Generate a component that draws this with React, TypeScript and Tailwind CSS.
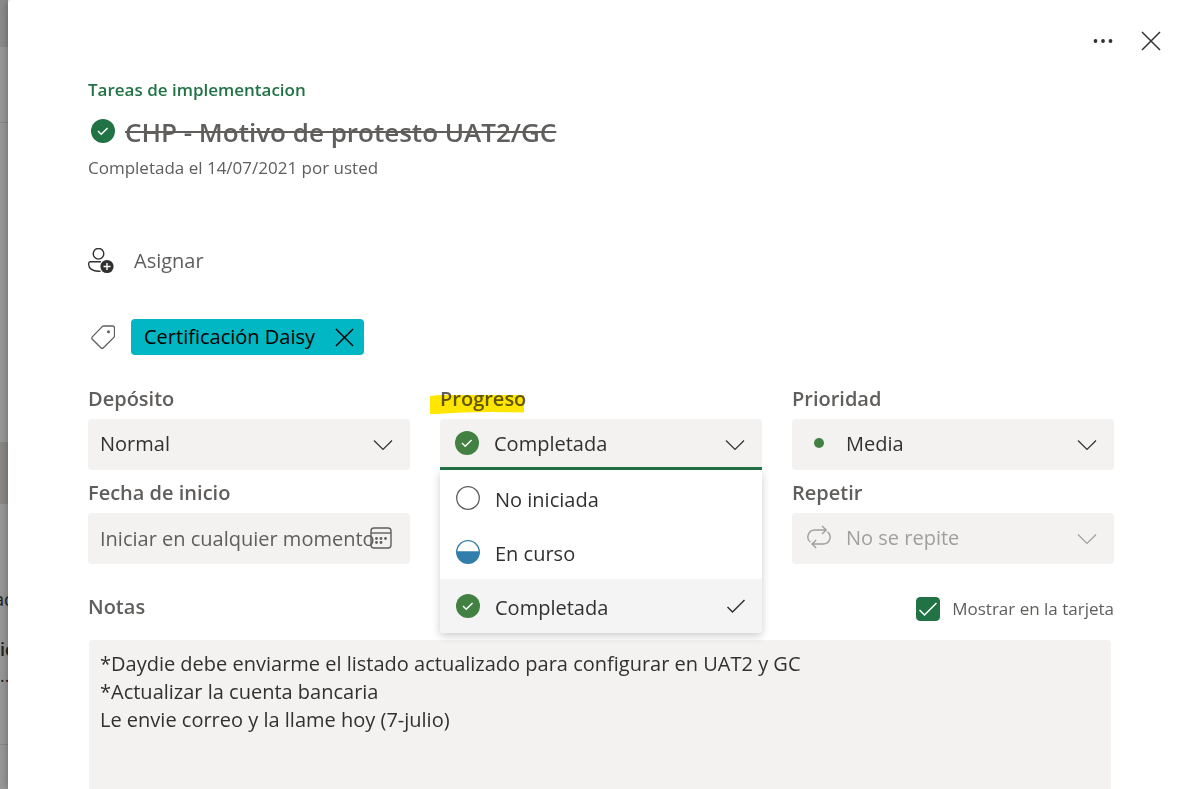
import React, { useState } from 'react';

// Small drawings used by the form
function CheckCircle({ className }: { className: string }) {
  return (
    <svg viewBox="0 0 24 24" className={className} aria-hidden="true">
      <circle cx="12" cy="12" r="12" fill="currentColor" />
      <path d="M7 12.1l3.2 3.2 6.4-6.4" fill="none" stroke="#fff" strokeWidth="1.4" />
    </svg>
  );
}

function EmptyCircle() {
  return (
    <svg viewBox="0 0 24 24" className="size-6" aria-hidden="true">
      <circle cx="12" cy="12" r="11.3" fill="#fff" stroke="#605e5c" strokeWidth="1.3" />
    </svg>
  );
}

function HalfCircle() {
  return (
    <svg viewBox="0 0 24 24" className="size-6 text-[#327eaa]" aria-hidden="true">
      <circle cx="12" cy="12" r="11.3" fill="#fff" stroke="currentColor" strokeWidth="1.3" />
      <path d="M0.5 11.3a11.5 12 0 0 0 23 0z" fill="currentColor" />
    </svg>
  );
}

function Chevron({ className }: { className: string }) {
  return (
    <svg viewBox="0 0 20 12" className={className} fill="none" stroke="currentColor" strokeWidth="1.2" aria-hidden="true">
      <path d="M1 1.5l9 9 9-9" />
    </svg>
  );
}

function Cross({ className }: { className: string }) {
  return (
    <svg viewBox="0 0 20 20" className={className} fill="none" stroke="currentColor" strokeWidth="1.5" aria-hidden="true">
      <path d="M1 1l18 18M19 1L1 19" />
    </svg>
  );
}

function Check({ className }: { className: string }) {
  return (
    <svg viewBox="0 0 20 16" className={className} fill="none" stroke="currentColor" strokeWidth="1.5" aria-hidden="true">
      <path d="M1.5 9l5 5L18.5 2" />
    </svg>
  );
}

function AssignIcon() {
  return (
    <svg viewBox="0 0 26 26" className="size-[26px] shrink-0" fill="none" stroke="#323130" strokeWidth="1.4" aria-hidden="true">
      <circle cx="10.5" cy="5.8" r="5.3" />
      <path d="M13 13.800H2.400a1.600 1.600 0 0 0-1.700 1.600v1c0 4 4.200 6.800 9.800 6.800h2" />
      <circle cx="19" cy="18.500" r="6.600" fill="#323130" stroke="none" />
      <path d="M19 15v7M15.500 18.500h7" stroke="#fff" />
    </svg>
  );
}

function TagIcon() {
  return (
    <svg viewBox="0 0 24 24" className="size-6 shrink-0" fill="none" stroke="#605e5c" strokeWidth="1.3" strokeLinejoin="round" aria-hidden="true">
      <path d="M12.8 1H21.5a2 2 0 0 1 2 2v8a2 2 0 0 1-.6 1.400L12.400 22.800a1.800 1.800 0 0 1-2.500 0L1.300 14.200a1.600 1.600 0 0 1 0-2.300L11.200 1.600a2.400 2.400 0 0 1 1.600-.6z" />
      <circle cx="17.5" cy="6.800" r="1.500" fill="#605e5c" stroke="none" />
    </svg>
  );
}

function CalendarIcon({ className }: { className: string }) {
  return (
    <svg viewBox="0 0 22 22" className={className} fill="none" stroke="#605e5c" strokeWidth="1.4" aria-hidden="true">
      <rect x="1" y="1" width="20" height="20" rx="3" />
      <path d="M1 6h20" />
      <g fill="#605e5c" stroke="none">
        <circle cx="6.5" cy="11.5" r="1.4" />
        <circle cx="11" cy="11.5" r="1.4" />
        <circle cx="15.5" cy="11.5" r="1.4" />
        <circle cx="6.5" cy="15.5" r="1.4" />
        <circle cx="11" cy="15.5" r="1.4" />
      </g>
    </svg>
  );
}

function RepeatIcon() {
  return (
    <svg viewBox="0 0 24 24" className="size-6" fill="none" stroke="#a19f9d" strokeWidth="1.4" aria-hidden="true">
      <path d="M3.5 17.3A6.9 6.9 0 0 1 7.5 5H19M15 1l4.2 4L15 9" />
      <path d="M20.5 6.7A6.9 6.9 0 0 1 16.5 19H5M9.2 15L5 19l4.2 4" />
    </svg>
  );
}

function PriorityDot() {
  return <span className="m-[7px] block size-[10px] rounded-full bg-[#428142]" />;
}

const STATES = [
  { name: 'No iniciada', icon: <EmptyCircle /> },
  { name: 'En curso', icon: <HalfCircle /> },
  { name: 'Completada', icon: <CheckCircle className="size-6 text-[#428142]" /> },
];

const NOTES = `*Daydie debe enviarme el listado actualizado para configurar en UAT2 y GC
*Actualizar la cuenta bancaria
Le envie correo y la llame hoy (7-julio)`;

const LABEL = 'relative block text-xl leading-7 font-semibold text-[#605e5c]';
const FIELD = 'block h-[51px] w-full appearance-none rounded bg-[#f3f2f1] text-xl outline-none';

type FieldProps = {
  id: string;
  label: string;
  options: string[];
  icon?: React.ReactNode;
  disabled?: boolean;
};

function SelectField({ id, label, options, icon, disabled }: FieldProps) {
  return (
    <div className={disabled ? 'col-start-3' : ''}>
      <label htmlFor={id} className={LABEL}>{label}</label>
      <div className={`relative mt-1.5 ${disabled ? 'text-[#a19f9d]' : 'text-[#323130]'}`}>
        {icon && <span className="absolute top-3 left-[15px]">{icon}</span>}
        <select id={id} disabled={disabled} className={`${FIELD} pr-12 pb-0.5 opacity-100 ${icon ? 'pl-[54px]' : 'pl-3'}`}>
          {options.map((o) => <option key={o}>{o}</option>)}
        </select>
        <Chevron className="pointer-events-none absolute top-5 right-[17px] h-3 w-5" />
      </div>
    </div>
  );
}

function ProgressField() {
  const [open, setOpen] = useState(true);
  const [value, setValue] = useState('Completada');
  const current = STATES.find((s) => s.name === value);

  return (
    <div className="relative">
      {/* Highlighter stroke behind the label */}
      <svg viewBox="0 0 96 20" className="absolute top-[9px] -left-[11px] h-5 w-24" aria-hidden="true">
        <path d="M1 2Q10 0.5 18 1H95V18.5Q45 17 8 20L1 20z" fill="#ffe600" />
      </svg>
      <label htmlFor="progreso" className={`${LABEL} mix-blend-multiply`}>Progreso</label>
      <div className="relative mt-1.5 text-[#323130]">
        <span className="absolute top-3 left-[15px]">{current?.icon}</span>
        <select
          id="progreso"
          value={value}
          onChange={(e) => setValue(e.target.value)}
          onMouseDown={(e) => {
            e.preventDefault();
            setOpen(!open);
          }}
          className={`${FIELD} rounded-b-none border-b-3 border-[#217346] pt-0.5 pr-12 pl-[54px]`}
        >
          {STATES.map((s) => <option key={s.name}>{s.name}</option>)}
        </select>
        <Chevron className="pointer-events-none absolute top-5 right-[17px] h-3 w-5" />
        {open && (
          <div role="listbox" aria-label="Progreso" className="absolute top-full right-0 left-0 z-10 overflow-hidden rounded-b bg-white pt-px shadow-[0_3px_9px_rgba(0,0,0,0.2)]">
            {STATES.map((s) => (
              <button
                key={s.name}
                type="button"
                role="option"
                aria-selected={s.name === value}
                onClick={() => {
                  setValue(s.name);
                  setOpen(false);
                }}
                className={`flex h-[54px] w-full items-center px-4 text-left text-xl ${s.name === value ? 'bg-[#f4f4f4]' : 'bg-white'}`}
              >
                {s.icon}
                <span className="ml-[15px] flex-1 pt-1">{s.name}</span>
                {s.name === value && <Check className="h-4 w-5" />}
              </button>
            ))}
          </div>
        )}
      </div>
    </div>
  );
}

// Sliver of the dimmed board on the left of the panel
function Board() {
  return (
    <div aria-hidden="true" className="flex w-2 shrink-0 flex-col overflow-hidden bg-[#999] text-lg text-[#222]">
      <div className="h-[47px] shrink-0 bg-[#8c8c8c]" />
      <div className="h-[76px] shrink-0 border-b border-[#8a8a8a]" />
      <div className="mt-[319px] h-[62px] shrink-0 bg-[#8b8985]" />
      <div className="mt-[83px] -ml-1.5 leading-6">ac</div>
      <div className="mt-6 leading-7 font-semibold">ic</div>
      <div className="leading-6">...</div>
      <div className="mt-[57px] border-b border-[#8a8a8a]" />
    </div>
  );
}

export default function App() {
  return (
    <div className="flex h-screen overflow-hidden font-['Open_Sans','Noto_Sans',sans-serif]">
      <Board />
      <main className="flex min-w-0 flex-1 flex-col rounded-tl-sm bg-white pr-[75px] pl-20 shadow-[0_0_10px_rgba(0,0,0,0.35)]">
        <div className="-mr-[47px] flex h-[76px] shrink-0 items-center justify-end gap-7 pt-1.5 text-[#323130]">
          <button type="button" aria-label="Más opciones">
            <svg viewBox="0 0 20 4" className="h-1 w-5" fill="currentColor" aria-hidden="true">
              <circle cx="2.5" cy="2" r="1.9" />
              <circle cx="10" cy="2" r="1.9" />
              <circle cx="17.5" cy="2" r="1.9" />
            </svg>
          </button>
          <button type="button" aria-label="Cerrar">
            <Cross className="size-5" />
          </button>
        </div>

        <a href="#plan" className="self-start text-[17px] leading-7 font-semibold text-[#217346]">Tareas de implementacion</a>
        <div className="mt-2 flex items-center pl-[3px]">
          <button type="button" aria-label="Marcar como no completada">
            <CheckCircle className="size-6 text-[#217346]" />
          </button>
          <h1 className="ml-2.5 pt-0.5 text-[26px] leading-9 font-semibold text-[#605e5c] line-through">CHP - Motivo de protesto UAT2/GC</h1>
        </div>
        <p className="mt-1 text-[17px] leading-7 text-[#605e5c]">Completada el 14/07/2021 por usted</p>

        <button type="button" className="mt-[61px] flex h-9 items-center gap-5 self-start text-xl text-[#605e5c]">
          <AssignIcon />
          Asignar
        </button>

        <div className="mt-10 flex items-center gap-4 pl-[3px]">
          <TagIcon />
          <span className="flex h-9 items-center gap-5 rounded bg-[#00b7c3] pr-[10px] pl-[13px] text-xl text-black">
            Certificación Daisy
            <button type="button" aria-label="Quitar etiqueta">
              <Cross className="size-[19px]" />
            </button>
          </span>
        </div>

        <div className="mt-[30px] grid grid-cols-3 gap-x-[30px] gap-y-[9px]">
          <SelectField id="deposito" label="Depósito" options={['Normal']} />
          <ProgressField />
          <SelectField id="prioridad" label="Prioridad" options={['Media']} icon={<PriorityDot />} />
          <div>
            <label htmlFor="inicio" className={LABEL}>Fecha de inicio</label>
            <div className="relative mt-1.5">
              <input id="inicio" type="text" placeholder="Iniciar en cualquier momento" className={`${FIELD} pr-9 pl-3 placeholder:text-[#605e5c]`} />
              <CalendarIcon className="pointer-events-none absolute top-[14px] right-[18px] size-[22px]" />
            </div>
          </div>
          <SelectField id="repetir" label="Repetir" options={['No se repite']} icon={<RepeatIcon />} disabled />
        </div>

        <div className="mt-[27px] flex items-center justify-between">
          <label htmlFor="notas" className={LABEL}>Notas</label>
          <label className="flex items-center gap-3 pt-1 text-[17px] leading-7 text-[#605e5c]">
            <span className="relative size-6">
              <input type="checkbox" defaultChecked className="peer block size-6 appearance-none rounded border border-[#605e5c] bg-white checked:border-[#217346] checked:bg-[#217346]" />
              <Check className="pointer-events-none absolute top-1 left-0.5 hidden h-4 w-5 text-white peer-checked:block" />
            </span>
            Mostrar en la tarjeta
          </label>
        </div>
        <textarea
          id="notas"
          defaultValue={NOTES}
          className="mt-[17px] mr-[3px] ml-px flex-1 resize-none rounded-t bg-[#f3f2f1] px-[11px] pt-[10px] text-xl leading-7 text-[#323130] outline-none"
        />
      </main>
    </div>
  );
}
